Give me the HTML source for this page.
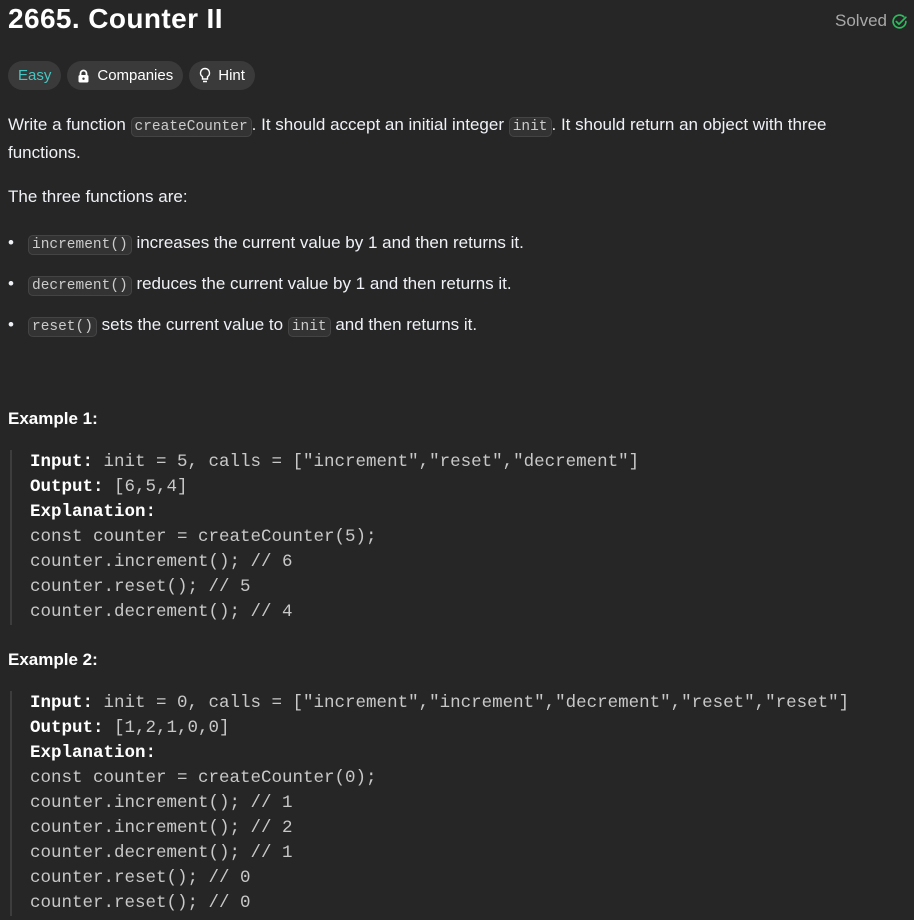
<!DOCTYPE html>
<html><head><style>
body{margin:0;background:#262626;color:#eff1f6;font-family:"Liberation Sans",sans-serif;width:914px;height:920px;overflow:hidden;position:relative}
.title{position:absolute;left:8px;top:3px;font-size:28px;font-weight:bold;color:#fff;letter-spacing:0.4px}
.solved{position:absolute;right:6px;top:11px;font-size:17px;color:#a8a8a8;display:flex;align-items:center;gap:4px}
.tags{position:absolute;left:8px;top:61px;display:flex;gap:6px}
.tag{height:29px;border-radius:15px;background:#3a3a3a;font-size:15px;display:flex;align-items:center;padding:0 10px;color:#fff;gap:7px}
p{position:absolute;left:8px;margin:0;font-size:17px;line-height:26px;width:870px}
code{font-family:"Liberation Mono",monospace;font-size:14.5px;background:#333;border:1px solid #444;border-radius:5px;padding:1px 3px;color:#ccc}
.li{position:absolute;left:8px;font-size:17px}
.li:before{content:"•";position:absolute;left:0}
.li span.t{margin-left:20px}
h4{position:absolute;left:8px;margin:0;font-size:17px;font-weight:bold;color:#fff}
pre{position:absolute;left:10px;margin:0;border-left:2px solid #3d3d3d;padding-left:18px;font-family:"Liberation Mono",monospace;font-size:17.5px;line-height:25px;color:#c8c8c8}
pre b{color:#fff}
</style></head><body>
<div class="title">2665. Counter II</div>
<div class="solved">Solved <svg width="17" height="17" viewBox="0 0 16 16"><path d="M14 8a6 6 0 1 1-2-4.5" fill="none" stroke="#2cbb5d" stroke-width="1.6" stroke-linecap="round"/><path d="M5 8l2.5 2.5L14 4" fill="none" stroke="#2cbb5d" stroke-width="1.6" stroke-linecap="round"/></svg></div>
<div class="tags">
<div class="tag" style="color:#46c6c2">Easy</div>
<div class="tag"><svg width="13" height="14" viewBox="0 0 13 14"><path d="M3.5 6V4.5a3 3 0 0 1 6 0V6" fill="none" stroke="#fff" stroke-width="1.8"/><rect x="1.5" y="6" width="10" height="7.5" rx="1.5" fill="#fff"/><circle cx="6.5" cy="9.7" r="1.2" fill="#3a3a3a"/></svg>Companies</div>
<div class="tag"><svg width="12" height="17" viewBox="0 0 12 17"><path d="M6 1.5a4.5 4.5 0 0 0-2.5 8.2V12h5V9.7A4.5 4.5 0 0 0 6 1.5zM4 14.5h4" fill="none" stroke="#fff" stroke-width="1.4"/></svg>Hint</div>
</div>
<p style="top:112px">Write a function <code>createCounter</code>. It should accept an initial integer <code>init</code>. It should return an object with three functions.</p>
<p style="top:184px">The three functions are:</p>
<div class="li" style="top:233px"><span class="t"><code>increment()</code> increases the current value by 1 and then returns it.</span></div>
<div class="li" style="top:274px"><span class="t"><code>decrement()</code> reduces the current value by 1 and then returns it.</span></div>
<div class="li" style="top:315px"><span class="t"><code>reset()</code> sets the current value to <code>init</code> and then returns it.</span></div>
<h4 style="top:409px">Example 1:</h4>
<pre style="top:450px"><b>Input:</b> init = 5, calls = ["increment","reset","decrement"]
<b>Output:</b> [6,5,4]
<b>Explanation:</b>
const counter = createCounter(5);
counter.increment(); // 6
counter.reset(); // 5
counter.decrement(); // 4</pre>
<h4 style="top:650px">Example 2:</h4>
<pre style="top:691px"><b>Input:</b> init = 0, calls = ["increment","increment","decrement","reset","reset"]
<b>Output:</b> [1,2,1,0,0]
<b>Explanation:</b>
const counter = createCounter(0);
counter.increment(); // 1
counter.increment(); // 2
counter.decrement(); // 1
counter.reset(); // 0
counter.reset(); // 0</pre>
</body></html>
